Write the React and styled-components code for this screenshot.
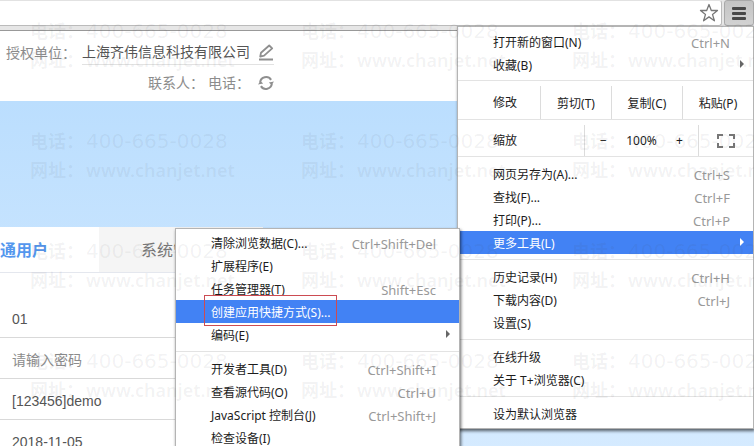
import React from "react";
import styled, { createGlobalStyle } from "styled-components";

const GlobalStyle = createGlobalStyle`
  * {
    box-sizing: border-box;
  }

  body {
    margin: 0;
    overflow: hidden;
    font-family: "Noto Sans", "Noto Sans CJK SC", sans-serif;
  }

  button,
  input {
    font-family: inherit;
    border: 0;
    padding: 0;
    background: none;
  }

  ul {
    list-style: none;
    margin: 0;
    padding: 0;
  }
`;

const Page = styled.div`
  position: relative;
  display: flex;
  flex-direction: column;
  height: 100vh;
  overflow: hidden;
  background-color: #fff;
`;

const Toolbar = styled.div`
  display: flex;
  flex: none;
  gap: 2px;
  padding-bottom: 4px;
  background-color: #e6e6e6;
  border-bottom: 1px solid #999;
`;

const AddressBar = styled.div`
  display: flex;
  flex: 1;
  align-items: center;
  height: 26px;
  padding-right: 2px;
  background-color: #fff;
  border: 1px solid #bbb;
  border-top-color: #e2e2e2;
  border-left: 0;
  border-radius: 0 3px 3px 0;
`;

const AddressInput = styled.input`
  flex: 1;
  min-width: 0;
  font-size: 14px;
  outline: none;
`;

const StarButton = styled.button`
  display: flex;
`;

const MenuButton = styled.button`
  display: flex;
  flex-direction: column;
  align-items: center;
  justify-content: center;
  gap: 2px;
  width: 30px;
  height: 26px;
  background: linear-gradient(#c4c4c4, #d2d2d2);
  border: 1px solid #a9a9a9;
  border-radius: 3px;
`;

const Bar = styled.span`
  width: 14px;
  height: 3px;
  border-radius: 1px;
  background-color: #484848;
`;

const Header = styled.header`
  flex: none;
  display: flex;
  flex-direction: column;
  align-items: flex-end;
  width: 274px;
  height: 70px;
  padding-top: 9px;
  font-size: 14px;
  line-height: 24px;
  color: #8c8c8c;
  white-space: nowrap;
`;

const HeaderRow = styled.div`
  display: flex;
  align-items: center;
  margin-bottom: 6px;
`;

const Company = styled.span`
  display: flex;
  align-items: center;
  margin-left: 6px;
  color: #555;
  border-bottom: 1px solid #e2e2e2;
`;

const Contact = styled.span`
  margin-left: 4px;
`;

const IconButton = styled.button`
  display: flex;
  margin-left: 8px;
  color: #8f8f8f;
`;

const Content = styled.main`
  flex: 1;
  padding-top: 126px;
  background: linear-gradient(#bbdefe, #d6ebff);
`;

const LoginPanel = styled.form`
  width: 263px;
  height: 100%;
  background-color: #fff;
  overflow: hidden;
`;

const Tabs = styled.div`
  display: flex;
  height: 46px;
  margin-bottom: 24px;
  border-bottom: 1px solid #e4e7ee;
`;

const Tab = styled.button`
  display: flex;
  flex: ${(props) => (props.$active ? "none" : "1")};
  align-items: center;
  justify-content: ${(props) => (props.$active ? "flex-end" : "center")};
  width: ${(props) => (props.$active ? "99px" : "auto")};
  padding-right: ${(props) => (props.$active ? "51px" : "0")};
  font-size: 16px;
  font-weight: ${(props) => (props.$active ? "bold" : "normal")};
  line-height: 24px;
  white-space: nowrap;
  color: ${(props) => (props.$active ? "#5497ee" : "#777")};
  background-color: ${(props) => (props.$active ? "#fff" : "#f5f5f5")};
`;

const Field = styled.input`
  display: block;
  width: 100%;
  height: 41px;
  padding: 4px 12px 0;
  border-bottom: 1px solid #d9d9d9;
  font-family: "Liberation Sans", "Noto Sans CJK SC", sans-serif;
  font-size: 14px;
  color: #555;
  outline: none;

  &::placeholder {
    color: #8c8c8c;
    opacity: 1;
  }
`;

const Menu = styled.ul`
  position: absolute;
  top: 26px;
  right: 0;
  z-index: 2;
  width: 297px;
  background-color: #fff;
  border: 1px solid #b4b4b4;
  box-shadow: 1px 2px 3px rgba(0, 0, 0, 0.6);
`;

const SubMenu = styled(Menu)`
  top: -3px;
  right: calc(100% - 2px);
  width: 285px;
`;

const Group = styled.ul`
  padding: 5px 0;
  border-bottom: 1px solid #e3e3e3;

  li:first-child > & {
    padding: 3px 0 4px;
  }

  ${SubMenu} li:first-child > & {
    padding: 2px 0 5px;
  }

  li:last-child > & {
    padding-bottom: 3px;
    border-bottom: 0;
  }
`;

const Item = styled.li`
  position: relative;
`;

const ItemButton = styled.button`
  display: flex;
  align-items: center;
  justify-content: space-between;
  width: 100%;
  height: 23px;
  padding: 2px 23px 0 35px;
  font-size: 12px;
  line-height: 20px;
  text-align: left;
  color: ${(props) => (props.$active ? "#fff" : "#1c1c1c")};
  background-color: ${(props) => (props.$active ? "#4282f4" : "transparent")};
`;

const Shortcut = styled.span`
  font-size: 13px;
  color: #999;
`;

const Arrow = styled.span`
  position: absolute;
  top: 7px;
  right: 9px;
  border: 4px solid transparent;
  border-left-color: ${(props) => (props.$active ? "#fff" : "#666")};
  border-right: 0;
`;

const Outline = styled.span`
  position: absolute;
  top: -5px;
  bottom: -3px;
  left: 28px;
  z-index: 1;
  width: 133px;
  border: 1px solid #cc4b52;
  pointer-events: none;
`;

const ActionRow = styled.div`
  display: flex;
  height: ${(props) => props.$height}px;
  padding-top: 5px;
  border-bottom: 1px solid #e3e3e3;
  font-size: 12px;
  line-height: 20px;
  color: #1c1c1c;
`;

const ActionLabel = styled.span`
  flex: 1;
  display: flex;
  align-items: center;
  padding-left: 35px;
`;

const Action = styled.button`
  width: 71px;
  font-size: 12px;
  color: #1c1c1c;
  border-left: 1px solid #dcdcdc;
`;

const ZoomControl = styled.div`
  display: flex;
  align-items: center;
  justify-content: space-between;
  width: 114px;
  padding: 0 15px;
  border-left: 1px solid #dcdcdc;
`;

const ZoomButton = styled.button`
  font-size: 12px;
  color: #1c1c1c;
`;

const FullScreenButton = styled.button`
  display: flex;
  align-items: center;
  justify-content: center;
  width: 55px;
  border-left: 1px solid #dcdcdc;
`;

const Watermark = styled.div`
  position: absolute;
  top: 17px;
  left: 30px;
  z-index: 5;
  display: grid;
  grid-template-columns: repeat(3, 271px);
  grid-auto-rows: 110px;
  color: rgba(70, 70, 80, 0.07);
  pointer-events: none;
  user-select: none;
`;

const Stamp = styled.div`
  display: grid;
  grid-template-columns: 56px auto;
  grid-auto-rows: 29px;
  align-content: start;
  justify-content: start;
  font-size: 18px;
  font-weight: 600;
  line-height: 28px;
  white-space: nowrap;
`;

const StampNumber = styled.span`
  font-family: "DejaVu Sans", sans-serif;
  font-size: 20px;
  font-weight: normal;
`;

const StarIcon = () => (
  <svg width="20" height="20" viewBox="0 0 20 20" fill="none" stroke="#777" strokeWidth="1.3" strokeLinejoin="round">
    <path d="M10 1.5l2.3 6h6.2l-5 3.9 1.9 6.4-5.4-3.9-5.4 3.9 1.9-6.4-5-3.9h6.2z" />
  </svg>
);

const EditIcon = () => (
  <svg width="16" height="17" viewBox="0 0 16 17" fill="none" stroke="currentColor">
    <path d="M2.2 12.6l.8-3.9 8.2-7.2 3 2.9-8.1 7.3z" strokeWidth="1.8" strokeLinejoin="round" />
    <path d="M1 15.5h14" strokeWidth="2" />
  </svg>
);

const RefreshIcon = () => (
  <svg width="16" height="16" viewBox="0 0 16 16">
    <g fill="none" stroke="currentColor" strokeWidth="2">
      <path d="M2.1 7.5a6 6 0 0 1 11-2.6" />
      <path d="M13.9 8.5a6 6 0 0 1-11 2.6" />
    </g>
    <path d="M0 9.6l2.4-3.6 2.8 2.6zM16 6.4l-2.4 3.6-2.8-2.6z" fill="currentColor" />
  </svg>
);

const FullScreenIcon = () => (
  <svg width="18" height="14" viewBox="0 0 18 14" fill="none" stroke="#777" strokeWidth="2">
    <path d="M6 1H1v4M12 1h5v4M6 13H1V9M12 13h5V9" />
  </svg>
);

const toolGroups = [
  [
    { label: "清除浏览数据(C)...", shortcut: "Ctrl+Shift+Del" },
    { label: "扩展程序(E)" },
    { label: "任务管理器(T)", shortcut: "Shift+Esc" },
    { label: "创建应用快捷方式(S)...", active: true, outlined: true },
    { label: "编码(E)", arrow: true },
  ],
  [
    { label: "开发者工具(D)", shortcut: "Ctrl+Shift+I" },
    { label: "查看源代码(O)", shortcut: "Ctrl+U" },
    { label: "JavaScript 控制台(J)", shortcut: "Ctrl+Shift+J" },
    { label: "检查设备(I)" },
  ],
];

const openGroup = [
  { label: "打开新的窗口(N)", shortcut: "Ctrl+N" },
  { label: "收藏(B)", arrow: true },
];

const mainGroups = [
  [
    { label: "网页另存为(A)...", shortcut: "Ctrl+S" },
    { label: "查找(F)...", shortcut: "Ctrl+F" },
    { label: "打印(P)...", shortcut: "Ctrl+P" },
    { label: "更多工具(L)", arrow: true, active: true, children: toolGroups },
  ],
  [
    { label: "历史记录(H)", shortcut: "Ctrl+H" },
    { label: "下载内容(D)", shortcut: "Ctrl+J" },
    { label: "设置(S)" },
  ],
  [{ label: "在线升级" }, { label: "关于 T+浏览器(C)" }],
  [{ label: "设为默认浏览器" }],
];

const MenuGroup = ({ items }) => (
  <li>
    <Group>
      {items.map((item) => (
        <Item key={item.label}>
          <ItemButton type="button" $active={item.active}>
            <span>{item.label}</span>
            {item.shortcut && <Shortcut>{item.shortcut}</Shortcut>}
            {item.arrow && <Arrow $active={item.active} />}
          </ItemButton>
          {item.outlined && <Outline />}
          {item.children && (
            <SubMenu>
              {item.children.map((group) => (
                <MenuGroup key={group[0].label} items={group} />
              ))}
            </SubMenu>
          )}
        </Item>
      ))}
    </Group>
  </li>
);

const App = () => {
  return (
    <Page>
      <GlobalStyle />

      <Toolbar>
        <AddressBar>
          <AddressInput aria-label="地址" />
          <StarButton type="button" aria-label="收藏">
            <StarIcon />
          </StarButton>
        </AddressBar>
        <MenuButton type="button" aria-label="菜单">
          <Bar />
          <Bar />
          <Bar />
        </MenuButton>
      </Toolbar>

      <Header>
        <HeaderRow>
          <span>授权单位：</span>
          <Company>
            上海齐伟信息科技有限公司
            <IconButton type="button" aria-label="编辑">
              <EditIcon />
            </IconButton>
          </Company>
        </HeaderRow>
        <HeaderRow>
          <Contact>联系人：</Contact>
          <Contact>电话：</Contact>
          <IconButton type="button" aria-label="刷新">
            <RefreshIcon />
          </IconButton>
        </HeaderRow>
      </Header>

      <Content>
        <LoginPanel>
          <Tabs>
            <Tab type="button" $active>
              普通用户
            </Tab>
            <Tab type="button">系统管理员</Tab>
          </Tabs>
          <Field aria-label="用户名" defaultValue="01" />
          <Field aria-label="密码" type="password" placeholder="请输入密码" />
          <Field aria-label="账套" defaultValue="[123456]demo" />
          <Field aria-label="日期" defaultValue="2018-11-05" />
        </LoginPanel>
      </Content>

      <Menu>
        <MenuGroup items={openGroup} />
        <li>
          <ActionRow $height={39}>
            <ActionLabel>修改</ActionLabel>
            <Action type="button">剪切(T)</Action>
            <Action type="button">复制(C)</Action>
            <Action type="button">粘贴(P)</Action>
          </ActionRow>
        </li>
        <li>
          <ActionRow $height={37}>
            <ActionLabel>缩放</ActionLabel>
            <ZoomControl>
              <ZoomButton type="button">−</ZoomButton>
              <span>100%</span>
              <ZoomButton type="button">+</ZoomButton>
            </ZoomControl>
            <FullScreenButton type="button" aria-label="全屏">
              <FullScreenIcon />
            </FullScreenButton>
          </ActionRow>
        </li>
        {mainGroups.map((group) => (
          <MenuGroup key={group[0].label} items={group} />
        ))}
      </Menu>

      <Watermark aria-hidden="true">
        {Array.from({ length: 12 }, (_, i) => (
          <Stamp key={i}>
            <span>电话：</span>
            <StampNumber>400-665-0028</StampNumber>
            <span>网址：</span>
            <span>www.chanjet.net</span>
          </Stamp>
        ))}
      </Watermark>
    </Page>
  );
};

export default App;
